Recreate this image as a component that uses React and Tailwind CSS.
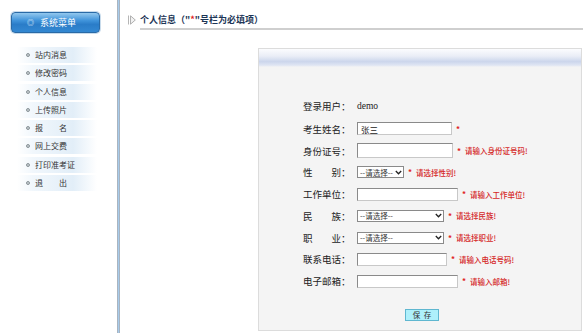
import React from 'react';

const menu = ['站内消息', '修改密码', '个人信息', '上传照片', '报　　名', '网上交费', '打印准考证', '退　　出'];

const rows = [
  { label: '考生姓名', kind: 'input', w: 'w-[95px]', h: 'h-[13px]', value: '张三' },
  { label: '身份证号', kind: 'input', w: 'w-[96px]', h: 'h-[15px]', msg: '请输入身份证号码!' },
  { label: '性别', kind: 'select', w: 'w-[47px]', msg: '请选择性别!' },
  { label: '工作单位', kind: 'input', w: 'w-[101px]', h: 'h-[13px]', msg: '请输入工作单位!' },
  { label: '民族', kind: 'select', w: 'w-[87px]', msg: '请选择民族!' },
  { label: '职业', kind: 'select', w: 'w-[87px]', msg: '请选择职业!' },
  { label: '联系电话', kind: 'input', w: 'w-[90px]', h: 'h-[13px]', msg: '请输入电话号码!' },
  { label: '电子邮箱', kind: 'input', w: 'w-[101px]', h: 'h-[13px]', msg: '请输入邮箱!' },
];

const cjk = "font-['Noto_Sans_CJK_SC','Noto_Sans',sans-serif]";

function Label({ text }) {
  return (
    <div className="flex w-[54px] shrink-0 text-[9.5px] text-[#222]">
      <div className="flex w-[38px] justify-between">
        {text.split('').map((c, i) => <span key={i}>{c}</span>)}
      </div>
      <span>：</span>
    </div>
  );
}

function FakeSelect({ w }) {
  return (
    <div className={`${w} h-[12px] flex items-center justify-between border border-[#8a8a8a] bg-white pl-[2px] pr-[1px] text-[7.5px] leading-none text-[#333]`}>
      <span>--请选择--</span>
      <svg width="7" height="5" viewBox="0 0 7 5">
        <path d="M0.8 1 L3.5 3.8 L6.2 1" fill="none" stroke="#222" strokeWidth="1.3" />
      </svg>
    </div>
  );
}

export default function App() {
  return (
    <div className={`flex h-[335px] w-[583px] overflow-hidden bg-white ${cjk}`}>
      {/* sidebar */}
      <div className="w-[117px] shrink-0">
        <div className="ml-[11px] mt-[12px] flex h-[21px] w-[89px] items-center rounded-[4px] border border-[#2a6aa6] bg-[linear-gradient(to_bottom,#93c8ee,#3f93da_40%,#2a7cc8_60%,#3388d2)] pl-[15px] shadow-[0_0_0_1px_#c9dcec]">
          <span className="mr-[6px] text-[7px] leading-none text-[#e8f3fc]">◎</span>
          <span className="text-[9px] text-white">系统菜单</span>
        </div>
        <div className="ml-[17px] mt-[14px] w-[80px]">
          {menu.map((m) => (
            <div key={m} className="mb-[2.3px] flex h-[16px] items-center bg-[linear-gradient(to_right,#ffffff,#f1f7fc_20%,#e2eef8_70%,#ffffff)] pl-[9px]">
              <span className="mr-[5px] h-[4px] w-[4px] rounded-full border border-[#8a9499] bg-[#c4ccd0]" />
              <span className="text-[8px] leading-none text-[#333]">{m}</span>
            </div>
          ))}
        </div>
      </div>

      {/* divider */}
      <div className="h-[333px] w-[3px] shrink-0 border-x border-[#a9b4c0] bg-[#a7cbeb]" />

      {/* main */}
      <div className="flex-1">
        <div className="flex items-start pl-[8px]">
          <svg className="mt-[15px]" width="8" height="10" viewBox="0 0 8 10">
            <path d="M0.5 0.5 V9.5" stroke="#b5b5b5" strokeWidth="1" />
            <path d="M2.5 0.8 L7.3 5 L2.5 9.2 Z" fill="#f2f2f2" stroke="#a8a8a8" strokeWidth="0.9" />
          </svg>
          <div className="ml-[4px] flex-1 border-b-2 border-[#cfcfcf] pb-[3px] pt-[14px] text-[9px] font-bold leading-[11px] text-[#1c3556]">
            个人信息（"<span className="text-[#e02020]">*</span>"号栏为必填项）
          </div>
        </div>

        {/* panel */}
        <div className="ml-[138px] mt-[18px] h-[283px] w-[324px] border border-[#dcdcdc] bg-[#f4f4f4]">
          <div className="h-[18px] bg-[linear-gradient(to_bottom,#fbfcfe,#e9edf6_40%,#ccd6ec_70%,#dfe5f3_90%,#f4f4f4)]" />
          <div className="pl-[44px] pt-[27px]">
            <div className="flex h-[24px] items-center">
              <Label text="登录用户" />
              <span className="font-['Liberation_Serif',serif] text-[9.5px] text-[#222]">demo</span>
            </div>
            {rows.map((r) => (
              <div key={r.label} className="flex h-[21.75px] items-center">
                <Label text={r.label} />
                {r.kind === 'input' ? (
                  <div className={`${r.w} ${r.h} flex items-center border border-[#8a8a8a] border-b-[#c8c8c8] border-r-[#c8c8c8] bg-white pl-[3px] text-[8.5px] leading-none text-[#222]`}>
                    {r.value}
                  </div>
                ) : (
                  <FakeSelect w={r.w} />
                )}
                <span className="ml-[4px] text-[8px] font-bold text-[#e02020]">*</span>
                {r.msg && <span className="ml-[4px] text-[7.5px] font-medium text-[#d42828]">{r.msg}</span>}
              </div>
            ))}
            <div className="mt-[17px] flex pl-[102px]">
              <button className="flex h-[12px] w-[34px] items-center justify-center border border-[#5fb7d0] bg-[#aef0fb] text-[7.5px] leading-none text-[#333]">
                保&nbsp;&nbsp;存
              </button>
            </div>
          </div>
        </div>
      </div>
    </div>
  );
}
